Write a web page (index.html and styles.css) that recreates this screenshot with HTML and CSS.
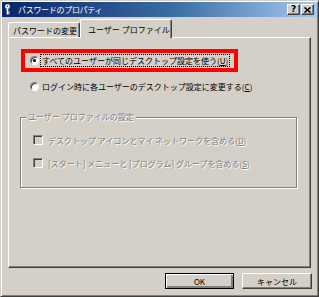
FILE: index.html
```html
<!DOCTYPE html>
<html lang="ja">
<head>
    <meta charset="UTF-8">
    <title>パスワードのプロパティ</title>
    <link rel="stylesheet" href="styles.css">
</head>
<body>

    <div class="window">
        <div class="titlebar">
            <svg class="key" width="7" height="11" viewBox="0 0 7 11">
                <circle cx="3.5" cy="2.5" r="2.2" fill="#fff" stroke="#c0c0c0" stroke-width="0.8"/>
                <circle cx="3.5" cy="2.3" r="0.7" fill="#0a246a"/>
                <rect x="2.7" y="4.5" width="1.6" height="6" fill="#fff"/>
                <rect x="4.3" y="7.5" width="1.5" height="1" fill="#fff"/>
                <rect x="4.3" y="9.2" width="1.2" height="1" fill="#fff"/>
            </svg>
            <span class="title">パスワードのプロパティ</span>
            <span class="capbtn help">?</span>
            <span class="capbtn close">
                <svg width="7" height="6" viewBox="0 0 7 6">
                    <path d="M0.5 0.5 L6.5 5.5 M6.5 0.5 L0.5 5.5" stroke="#000" stroke-width="1.6"/>
                </svg>
            </span>
        </div>

        <div class="tabs">
            <div class="tab">パスワードの変更</div>
            <div class="tab active">ユーザー プロファイル</div>
        </div>

        <div class="panel">
            <div class="highlight">
                <span class="radio checked"></span>
                <span class="focus">すべてのユーザーが同じデスクトップ設定を使う(<u>U</u>)</span>
            </div>
            <div class="option">
                <span class="radio"></span>
                <span>ログイン時に各ユーザーのデスクトップ設定に変更する(<u>C</u>)</span>
            </div>

            <fieldset class="group">
                <legend class="disabled">ユーザー プロファイルの設定</legend>
                <div class="check-row">
                    <span class="checkbox"></span>
                    <span class="disabled">デスクトップ アイコンとマイ ネットワークを含める(<u>D</u>)</span>
                </div>
                <div class="check-row">
                    <span class="checkbox"></span>
                    <span class="disabled">[スタート] メニューと [プログラム] グループを含める(<u>S</u>)</span>
                </div>
            </fieldset>
        </div>

        <div class="buttons">
            <div class="btn default">OK</div>
            <div class="btn">キャンセル</div>
        </div>
    </div>

</body>
</html>
```

FILE: styles.css
```css
body {
    margin: 0;
    font-family: "Noto Sans CJK JP", "Noto Sans", sans-serif;
    font-size: 8px;
    color: #000;
}
.window {
    box-sizing: border-box;
    width: 319px;
    height: 297px;
    background: #d4d0c8;
    border: 1px solid;
    border-color: #d4d0c8 #404040 #404040 #d4d0c8;
    box-shadow: inset 1px 1px #fff, inset -1px -1px #808080;
    padding: 1px;
    display: flex;
    flex-direction: column;
}

.titlebar {
    height: 15px;
    background: linear-gradient(to right, #0a246a, #3a6ea5 55%, #a6caf0);
    display: flex;
    align-items: center;
    padding: 0 3px 0 2px;
}
.key { margin-right: 7px; }
.title {
    color: #fff;
    flex: 1;
    letter-spacing: -0.3px;
}
.capbtn {
    box-sizing: border-box;
    width: 13px;
    height: 11px;
    background: #d4d0c8;
    border: 1px solid;
    border-color: #fff #404040 #404040 #fff;
    box-shadow: inset -1px -1px #808080;
    display: flex;
    align-items: center;
    justify-content: center;
    font-family: "DejaVu Sans", sans-serif;
    font-weight: bold;
    font-size: 9px;
    line-height: 1;
}
.help { margin-right: 1px; }

.tabs {
    display: flex;
    align-items: flex-end;
    height: 18px;
    margin: 2px 0 0 6px;
    position: relative;
    z-index: 1;
}
.tab {
    box-sizing: border-box;
    height: 15px;
    width: 72px;
    padding-left: 4px;
    display: flex;
    align-items: center;
    white-space: nowrap;
    background: #d4d0c8;
    border: 1px solid;
    border-color: #fff #404040 transparent #fff;
    border-bottom: none;
    border-radius: 2px 2px 0 0;
    box-shadow: inset -1px 0 #808080;
}
.tab.active {
    height: 19px;
    width: 92px;
    margin-bottom: -1px;
    padding-left: 7px;
}

.panel {
    box-sizing: border-box;
    width: 303px;
    height: 231px;
    margin-left: 6px;
    border: 1px solid;
    border-color: #fff #404040 #404040 #fff;
    box-shadow: inset -1px -1px #808080;
}

.highlight {
    box-sizing: border-box;
    width: 217px;
    height: 23px;
    margin: 11px 0 0 12px;
    border: 4px solid #f00;
    padding-left: 5px;
    display: flex;
    align-items: center;
    gap: 2px;
}
.focus {
    outline: 1px dotted #000;
    outline-offset: 0;
    padding: 0 1px;
    line-height: 11px;
}
.option {
    height: 14px;
    margin-top: 7px;
    padding-left: 21px;
    display: flex;
    align-items: center;
    gap: 3px;
}
.radio {
    box-sizing: border-box;
    width: 9px;
    height: 9px;
    border-radius: 50%;
    background: #fff;
    border: 1px solid;
    border-color: #808080 #fff #fff #808080;
    box-shadow: inset 1px 1px #404040;
    display: flex;
    align-items: center;
    justify-content: center;
}
.radio.checked::after {
    content: "";
    width: 3px;
    height: 3px;
    border-radius: 50%;
    background: #000;
}

.group {
    box-sizing: border-box;
    width: 277px;
    height: 77px;
    margin: 18px 0 0 11px;
    padding: 11px 0 0 0;
    border: 1px solid #808080;
    box-shadow: inset 1px 1px #fff, 1px 1px #fff;
    min-width: 0;
}
.group legend {
    padding: 0 2px;
    margin-left: 5px;
    background: #d4d0c8;
    line-height: 12px;
}
.disabled {
    color: #808080;
    text-shadow: 1px 1px #fff;
}
.check-row {
    height: 12px;
    display: flex;
    align-items: center;
    gap: 5px;
    padding-left: 12px;
    margin-bottom: 11px;
}
.checkbox {
    box-sizing: border-box;
    width: 10px;
    height: 10px;
    background: #d4d0c8;
    border: 1px solid;
    border-color: #808080 #fff #fff #808080;
    box-shadow: inset 1px 1px #404040;
}

.buttons {
    display: flex;
    justify-content: flex-end;
    gap: 8px;
    margin: 5px 5px 0 0;
}
.btn {
    box-sizing: border-box;
    width: 70px;
    height: 16px;
    display: flex;
    align-items: center;
    justify-content: center;
    background: #d4d0c8;
    border: 1px solid;
    border-color: #fff #404040 #404040 #fff;
    box-shadow: inset -1px -1px #808080;
}
.btn.default {
    width: 69px;
    border-color: #000;
    box-shadow: inset 1px 1px #fff, inset -2px -2px #808080;
}
```
